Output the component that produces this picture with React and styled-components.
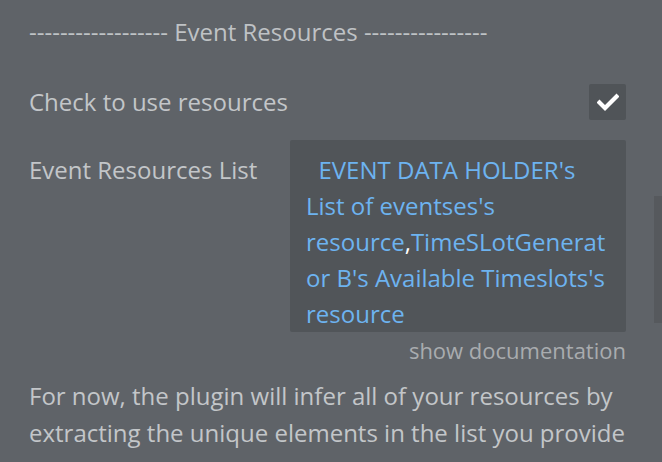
import React from "react";
import styled, { createGlobalStyle } from "styled-components";

const Global = createGlobalStyle`
  html, body { margin: 0; padding: 0; background: #5f6368; }
  body { font-family: "Open Sans", "Noto Sans", sans-serif; overflow: hidden; }
`;

const Page = styled.div`
  position: relative;
  width: 662px;
  height: 462px;
  background: #5f6368;
  padding: 16px 36px 0 29px;
  box-sizing: border-box;
  color: #c3c6c9;
`;

const Heading = styled.div`
  font-size: 24px;
  line-height: 32px;
  color: #bfc2c5;
  white-space: nowrap;
`;

const Row = styled.div`
  display: flex;
  align-items: ${(p) => p.$align || "center"};
  justify-content: space-between;
  margin-top: ${(p) => p.$mt || 0}px;
`;

const Label = styled.div`
  font-size: 24px;
  line-height: 36px;
  color: #c3c6c9;
  padding-top: ${(p) => p.$pt || 0}px;
`;

const CheckBox = styled.div`
  width: 37px;
  height: 36px;
  border-radius: 2px;
  background: #505458;
  display: flex;
  align-items: center;
  justify-content: center;
`;

const ValueBox = styled.div`
  width: 336px;
  box-sizing: border-box;
  background: #515559;
  border-radius: 2px;
  padding: 12px 14px 0 16px;
  font-size: 24px;
  line-height: 36px;
  color: #6db3f0;
  overflow-wrap: break-word;
`;

const Comma = styled.span`
  color: #ffffff;
`;

const DocLink = styled.div`
  text-align: right;
  font-size: 22px;
  line-height: 24px;
  color: #a9acaf;
  margin-top: 6px;
`;

const Para = styled.p`
  margin: 15px 0 0;
  font-size: 24px;
  line-height: 37px;
  color: #c3c6c9;
`;

const ScrollBar = styled.div`
  position: absolute;
  right: 0;
  top: 196px;
  width: 8px;
  height: 127px;
  background: #56595d;
`;

export default function App() {
  return (
    <>
      <Global />
      <Page>
        <Heading>------------------ Event Resources ----------------</Heading>
        <Row $mt={36}>
          <Label>Check to use resources</Label>
          <CheckBox>
            <svg width="22" height="18" viewBox="0 0 22 18">
              <path d="M2.5 9.5 L8 15 L19.5 3.5" fill="none" stroke="#fff" strokeWidth="4.2" strokeLinecap="square" />
            </svg>
          </CheckBox>
        </Row>
        <Row $align="flex-start" $mt={20}>
          <Label $pt={12}>Event Resources List</Label>
          <ValueBox>
            &nbsp;&nbsp;EVENT DATA HOLDER's List of eventses's resource<Comma>,</Comma>TimeSLotGenerator B's Available Timeslots's resource
          </ValueBox>
        </Row>
        <DocLink>show documentation</DocLink>
        <Para>
          For now, the plugin will infer all of your resources by extracting the unique elements in the list you provide
        </Para>
        <ScrollBar />
      </Page>
    </>
  );
}
